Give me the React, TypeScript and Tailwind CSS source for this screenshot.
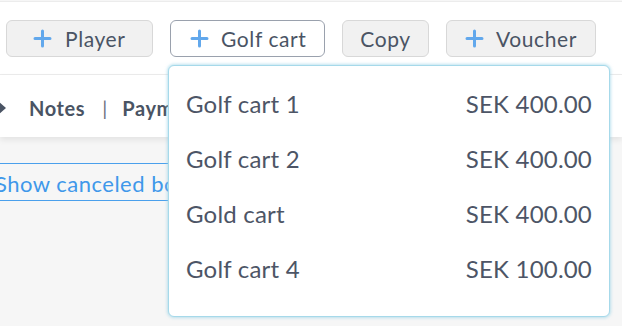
const carts = [
    { name: 'Golf cart 1', price: 'SEK 400.00' },
    { name: 'Golf cart 2', price: 'SEK 400.00' },
    { name: 'Gold cart', price: 'SEK 400.00' },
    { name: 'Golf cart 4', price: 'SEK 100.00' },
];

function PlusIcon() {
    return (
        <svg width="19" height="19" viewBox="0 0 19 19" className="shrink-0">
            <path d="M9.5 2v15M2 9.5h15" stroke="#62a8ec" strokeWidth="3" strokeLinecap="round" />
        </svg>
    );
}

export default function App() {
    return (
        <div
            className="relative w-[622px] h-[326px] overflow-hidden bg-[#f6f6f6] text-[#4a5464]"
            style={{ fontFamily: 'Lato, "Noto Sans", sans-serif' }}
        >
            <div className="bg-white border-t border-[#ececec] mt-[1px]">
                <div className="flex items-center gap-[17px] pl-[6px] pt-[18px] pb-[17px] border-b border-[#ececec]">
                    <button className="flex items-center h-[37px] w-[147px] pl-[26px] gap-[13px] rounded-md bg-[#f1f1f1] border border-[#d8d8d8] text-[21px] tracking-[0.6px]">
                        <PlusIcon />
                        Player
                    </button>
                    <button className="flex items-center h-[37px] w-[155px] pl-[19px] gap-[12px] rounded-md bg-white border border-[#9aa1ad] text-[21px] tracking-[0.6px]">
                        <PlusIcon />
                        Golf cart
                    </button>
                    <button className="flex items-center justify-center h-[37px] w-[87px] rounded-md bg-[#f1f1f1] border border-[#d8d8d8] text-[21px] tracking-[0.6px]">
                        Copy
                    </button>
                    <button className="flex items-center h-[37px] w-[150px] pl-[18px] gap-[12px] rounded-md bg-[#f1f1f1] border border-[#d8d8d8] text-[21px] tracking-[0.6px]">
                        <PlusIcon />
                        Voucher
                    </button>
                </div>
                <div className="flex items-center h-[62px] pt-[3px] shadow-[0_3px_6px_rgba(0,0,0,0.08)] text-[20px] font-bold">
                    <span className="w-0 h-0 border-y-[6px] border-y-transparent border-l-[7px] border-l-[#4a5464] -ml-[1px]" />
                    <span className="ml-[23px] tracking-[0.6px]">Notes</span>
                    <span className="ml-[17px] font-normal text-[#6b7280]">|</span>
                    <span className="ml-[15px] tracking-[0.6px]">Payments</span>
                </div>
            </div>

            <div className="mt-[26px] -ml-[5px] w-[200px] h-[38px] flex items-center pt-[2px] border-y border-[#4aa0ec] text-[#3f98ea] text-[22px] tracking-[0.5px] whitespace-nowrap">
                Show canceled bookings
            </div>

            <div className="absolute left-[168px] top-[65px] w-[442px] h-[252px] bg-white rounded-md border border-[#a6d9ea] shadow-[0_0_3px_1px_rgba(150,210,230,0.6)] pt-[10px] px-[17px] text-[#4d5566]">
                {carts.map((c) => (
                    <div key={c.name} className="flex items-center justify-between h-[55px] text-[24px] tracking-[0.2px]">
                        <span>{c.name}</span>
                        <span>{c.price}</span>
                    </div>
                ))}
            </div>
        </div>
    );
}
